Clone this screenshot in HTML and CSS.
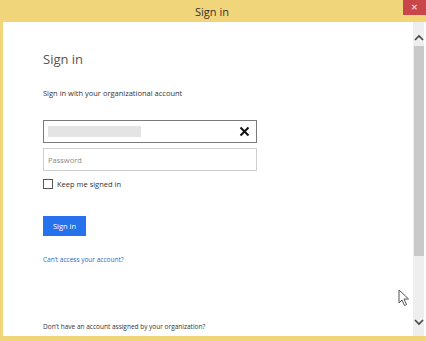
FILE: index.html
```html
<!DOCTYPE html>
<html>
  <head>
    <meta charset="UTF-8">
    <link rel="stylesheet" href="styles.css">
    <title>Sign in</title>
  </head>
  <body>
    <div class="window">
      <div class="titlebar">
        <span class="title">Sign in</span>
        <button class="close">&#x2715;</button>
      </div>
      <div class="frame">
        <div class="content">
          <h1 class="heading">Sign in</h1>
          <p class="intro">Sign in with your organizational account</p>
          <div class="field field-email">
            <span class="masked"></span>
            <svg class="clear" width="11" height="11" viewBox="0 0 11 11">
              <path d="M1.5 1.5 L9.5 9.5 M9.5 1.5 L1.5 9.5" stroke="#111" stroke-width="2"/>
            </svg>
          </div>
          <div class="field field-password">Password</div>
          <label class="remember"><span class="box"></span>Keep me signed in</label>
          <button class="submit">Sign in</button>
          <a class="help" href="#">Can’t access your account?</a>
          <div class="spacer"></div>
          <p class="footer">Don’t have an account assigned by your organization?</p>
        </div>
        <div class="scrollbar">
          <svg class="arrow" width="10" height="8" viewBox="0 0 10 8"><path d="M1 6 L5 2 L9 6" stroke="#444" stroke-width="1.6" fill="none"/></svg>
          <div class="thumb"></div>
          <div class="track"></div>
          <svg class="arrow" width="10" height="8" viewBox="0 0 10 8"><path d="M1 2 L5 6 L9 2" stroke="#444" stroke-width="1.6" fill="none"/></svg>
        </div>
      </div>
    </div>
    <svg class="cursor" width="12" height="18" viewBox="0 0 12 18">
      <path d="M1 1 L1 14 L4 11 L6.5 16.5 L8.5 15.5 L6 10 L10.5 10 Z" fill="#fff" stroke="#555" stroke-width="1"/>
    </svg>
  </body>
</html>
```

FILE: styles.css
```css
body {
  margin: 0;
  width: 426px;
  height: 341px;
  overflow: hidden;
  font-family: "Open Sans", "Noto Sans", sans-serif;
  background: #f0d57b;
  position: relative;
}

.window {
  display: flex;
  flex-direction: column;
  height: 341px;
  background: #f0d57b;
}

.titlebar {
  height: 22px;
  display: flex;
  justify-content: center;
  align-items: center;
  position: relative;
}

.title {
  font-size: 11px;
  color: #333;
  margin-left: -2px;
}

.close {
  position: absolute;
  right: 0;
  top: 0;
  width: 23px;
  height: 15px;
  border: none;
  padding: 0;
  background: #c9474a;
  color: #f2c9c9;
  font-size: 8px;
  font-weight: bold;
}

.frame {
  display: flex;
  height: 314px;
  margin-left: 3px;
  background: #fff;
}

.content {
  flex: 1;
  display: flex;
  flex-direction: column;
  align-items: flex-start;
  padding-left: 40px;
}

.heading {
  margin: 29px 0 0;
  font-size: 13px;
  font-weight: normal;
  color: #555;
  line-height: 16px;
}

.intro {
  margin: 21px 0 0;
  font-size: 7.5px;
  color: #333;
  line-height: 10px;
}

.field {
  box-sizing: border-box;
  width: 214px;
  height: 23px;
  display: flex;
  align-items: center;
  padding: 0 4px;
}

.field-email {
  margin-top: 22px;
  border: 1px solid #7a7a7a;
  justify-content: space-between;
}

.masked {
  width: 93px;
  height: 11px;
  background: #e4e4e4;
}

.clear {
  margin-right: 2px;
}

.field-password {
  margin-top: 5px;
  border: 1px solid #cfcfcf;
  font-size: 7.5px;
  color: #8a8a8a;
}

.remember {
  margin-top: 8px;
  display: flex;
  align-items: center;
  font-size: 7.5px;
  color: #333;
}

.box {
  box-sizing: border-box;
  width: 10px;
  height: 10px;
  border: 1px solid #555;
  margin-right: 4px;
}

.submit {
  margin-top: 27px;
  width: 43px;
  height: 20px;
  border: none;
  padding: 0;
  background: #2672ec;
  color: #fff;
  font-family: inherit;
  font-size: 7.5px;
}

.help {
  margin-top: 19px;
  font-size: 6.5px;
  color: #2a6ad0;
  text-decoration: none;
}

.spacer {
  flex: 1;
}

.footer {
  margin: 0 0 5px;
  font-size: 6.5px;
  color: #333;
}

.scrollbar {
  width: 11px;
  margin-right: 2px;
  background: #eeeeee;
  display: flex;
  flex-direction: column;
  align-items: center;
}

.arrow {
  margin: 12px 0 4px;
}

.scrollbar .arrow:last-child {
  margin: 6px 0 10px;
}

.thumb {
  width: 10px;
  height: 210px;
  background: #c9c9c9;
}

.track {
  flex: 1;
}

.cursor {
  position: absolute;
  left: 398px;
  top: 289px;
}
```
